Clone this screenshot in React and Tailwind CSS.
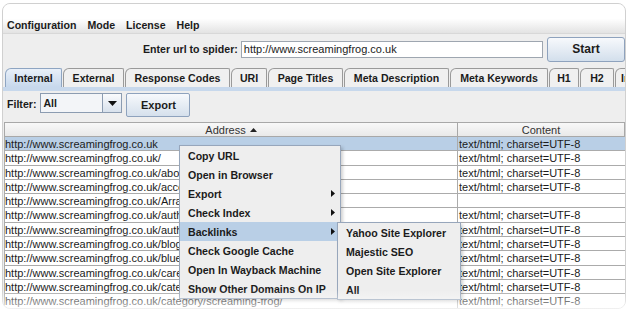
import React from "react";

const FONT = "font-['Liberation_Sans',Arial,sans-serif]";

const tabs = [
  ["Internal", "w-[57px] justify-center", true],
  ["External", "w-[61px] justify-center"],
  ["Response Codes", "w-[105px] justify-center"],
  ["URI", "w-[36px] justify-center"],
  ["Page Titles", "w-[75px] justify-center"],
  ["Meta Description", "w-[105px] justify-center"],
  ["Meta Keywords", "w-[98px] justify-center"],
  ["H1", "w-[30px] justify-center"],
  ["H2", "w-[34px] justify-center"],
  ["In", "w-[40px] justify-start pl-[5px]"],
];

const rows = [
  ["http://www.screamingfrog.co.uk", true, true],
  ["http://www.screamingfrog.co.uk/", true],
  ["http://www.screamingfrog.co.uk/about/", true],
  ["http://www.screamingfrog.co.uk/accessibility/", true],
  ["http://www.screamingfrog.co.uk/Arrange-a-Quote/", false],
  ["http://www.screamingfrog.co.uk/author/dan-sharp/", true],
  ["http://www.screamingfrog.co.uk/author/simon/", true],
  ["http://www.screamingfrog.co.uk/blog/", true],
  ["http://www.screamingfrog.co.uk/blue/", true],
  ["http://www.screamingfrog.co.uk/careers/", true],
  ["http://www.screamingfrog.co.uk/category/", true],
  ["http://www.screamingfrog.co.uk/category/screaming-frog/", true],
];

const menuItems = [
  ["Copy URL"],
  ["Open in Browser"],
  ["Export", true],
  ["Check Index", true],
  ["Backlinks", true, true],
  ["Check Google Cache"],
  ["Open In Wayback Machine"],
  ["Show Other Domains On IP"],
];

const subItems = ["Yahoo Site Explorer", "Majestic SEO", "Open Site Explorer", "All"];

function RightArrow() {
  return (
    <svg width="4" height="7" viewBox="0 0 4 7" className="absolute right-[5px] top-[6px]">
      <path d="M0 0L4 3.5L0 7Z" fill="#111" />
    </svg>
  );
}

export default function App() {
  return (
    <div className={`relative w-[630px] h-[312px] overflow-hidden bg-white text-[#1b1b1b] ${FONT}`}>
      <div className="ml-[2px] mt-[3px] w-[624px] h-[306px] rounded-[8px] border border-[#d0d0d0] overflow-hidden flex flex-col bg-[#eeeeee]">
        {/* menu bar */}
        <div className="h-[30px] shrink-0 flex items-end gap-[11px] pl-[4px] pb-[1px] bg-gradient-to-b from-white via-white to-[#e3e3e3] border-b border-[#d8d8d8] text-[10.6px] leading-[14px] font-bold">
          <span>Configuration</span>
          <span>Mode</span>
          <span>License</span>
          <span>Help</span>
        </div>

        {/* url row */}
        <div className="h-[30px] shrink-0 flex items-center text-[11px] leading-[14px]">
          <div className="w-[237px] text-right font-bold text-[10.6px]">Enter url to spider:</div>
          <div className="ml-[3px] w-[305px] h-[17px] bg-white border border-[#9ea6b0] flex items-center pl-[2px]">
            http://www.screamingfrog.co.uk
          </div>
          <div className="ml-[4px] w-[78px] h-[25px] shrink-0 rounded-[3px] border border-[#8ea2bd] bg-gradient-to-b from-[#f7f9fc] to-[#d3dfec] flex items-center justify-center font-bold text-[12px]">
            Start
          </div>
        </div>

        {/* tabs */}
        <div className="h-[23px] shrink-0 flex items-end gap-[1px] pl-[2px] pt-[4px] overflow-hidden">
          {tabs.map(([label, w, sel]) => (
            <div
              key={label}
              className={`${w} h-[19px] shrink-0 flex items-center font-bold text-[10.6px] leading-[14px] border border-b-0 rounded-tl-[6px] rounded-tr-[2px] ${
                sel
                  ? "border-[#8ea5c2] bg-gradient-to-b from-[#e9f0f9] to-[#c7d8ec]"
                  : "border-[#9a9a9a] bg-[#f0f0f0]"
              }`}
            >
              {label}
            </div>
          ))}
        </div>
        <div className="h-[4px] shrink-0 bg-[#c7d8ec]" />

        {/* filter row */}
        <div className="mt-[2px] h-[24px] shrink-0 flex items-start text-[10.6px] leading-[14px] font-bold">
          <span className="ml-[4px] mt-[4px]">Filter:</span>
          <div className="ml-[4px] w-[82px] h-[20px] border border-[#8c9cb1] bg-[#f3f5f8] flex">
            <div className="flex-1 pl-[2px] pt-[2px]">All</div>
            <div className="w-[19px] border-l border-[#8c9cb1] bg-gradient-to-b from-[#fafbfd] to-[#d8e1ec] flex items-center justify-center">
              <svg width="9" height="5" viewBox="0 0 9 5">
                <path d="M0 0H9L4.5 5Z" fill="#111" />
              </svg>
            </div>
          </div>
          <div className="ml-[4px] w-[64px] h-[24px] rounded-[2px] border border-[#8ea2bd] bg-gradient-to-b from-[#f7f9fc] to-[#d5e0ec] flex items-center justify-center text-[11px]">
            Export
          </div>
        </div>

        {/* table */}
        <div className="mt-[5px] ml-[1px] flex flex-col text-[11px] leading-[14px]">
          <div className="h-[15px] flex bg-gradient-to-b from-[#f8f8f8] to-[#e9e9e9] border border-[#a8a8a8]">
            <div className="w-[453px] border-r border-[#a8a8a8] flex items-center justify-center gap-[4px] text-[#333]">
              Address
              <svg width="7" height="4" viewBox="0 0 7 4">
                <path d="M0 4L3.5 0L7 4Z" fill="#222" />
              </svg>
            </div>
            <div className="flex-1 flex items-center justify-center text-[#333]">Content</div>
          </div>
          {rows.map(([addr, hasContent, sel], i) => (
            <div
              key={i}
              className={`h-[14.3px] flex border-l border-b border-[#ababab] ${sel ? "bg-[#b9cfe6]" : "bg-white"}`}
            >
              <div className="w-[453px] border-r border-[#ababab] whitespace-nowrap overflow-hidden">{addr}</div>
              <div className="flex-1 pl-[1px] whitespace-nowrap overflow-hidden">
                {hasContent ? "text/html; charset=UTF-8" : ""}
              </div>
            </div>
          ))}
        </div>
      </div>

      {/* context menu */}
      <div className="absolute left-[179px] top-[145px] w-[162px] bg-[#eeeeee] border border-[#97a6bb] shadow-[2px_2px_3px_rgba(0,0,0,0.18)] text-[10.6px] leading-[14px] font-bold">
        {menuItems.map(([label, arrow, hl]) => (
          <div key={label} className={`relative h-[19px] flex items-center pl-[8px] ${hl ? "bg-[#b9cfe6]" : ""}`}>
            {label}
            {arrow && <RightArrow />}
          </div>
        ))}
      </div>

      {/* submenu */}
      <div className="absolute left-[337px] top-[222px] w-[124px] bg-[#eeeeee] border border-[#97a6bb] shadow-[2px_2px_3px_rgba(0,0,0,0.18)] text-[10.6px] leading-[14px] font-bold">
        {subItems.map((label) => (
          <div key={label} className="h-[19px] flex items-center pl-[8px]">
            {label}
          </div>
        ))}
      </div>

      {/* bottom fade */}
      <div className="absolute left-0 right-0 bottom-0 h-[22px] bg-gradient-to-b from-white/0 to-white/80 pointer-events-none" />
    </div>
  );
}
